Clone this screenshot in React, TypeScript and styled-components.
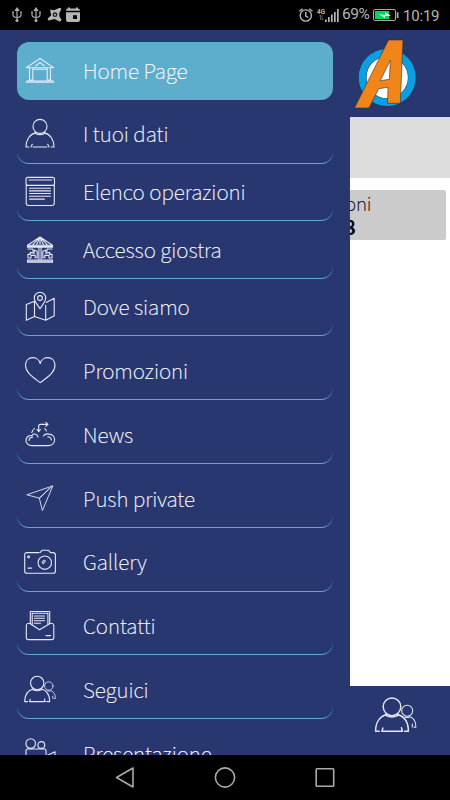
import React from "react";
import styled, { createGlobalStyle } from "styled-components";

const NAVY = "#293771";
const CYAN = "#5dadcd";

const GlobalStyle = createGlobalStyle`
  * { box-sizing: border-box; }
  body { margin: 0; background: #000; }
`;

const Phone = styled.div`
  display: flex;
  flex-direction: column;
  width: 450px;
  height: 800px;
  overflow: hidden;
  background: #000;
  font-family: "Noto Sans CJK SC", "Noto Sans", sans-serif;
  font-weight: 100;
`;

const StatusBar = styled.header`
  display: flex;
  justify-content: space-between;
  align-items: center;
  flex: none;
  height: 30px;
  padding: 0 10px 0 9px;
  color: #b5b5b5;
  font: 400 14.5px/30px Roboto, sans-serif;
`;

const StatusGroup = styled.div`
  display: flex;
  align-items: center;
  height: 30px;
`;

const Percent = styled.span`
  width: 28px;
  margin: -2px 2px 0 -2px;
  font-size: 15.5px;
  letter-spacing: -0.5px;
`;

const Clock = styled.span`
  width: 37px;
  margin-left: 4px;
  font-size: 15px;
  letter-spacing: -0.2px;
  padding-top: 1px;
`;

const Body = styled.main`
  display: flex;
  flex: none;
  height: 725px;
  overflow: hidden;
`;

const Drawer = styled.nav`
  display: flex;
  flex-direction: column;
  flex: none;
  width: 350px;
  height: 725px;
  padding: 12.3px 17px 0;
  overflow: hidden;
  background: ${NAVY};
`;

const MenuItem = styled.a<{ $active?: boolean; $gap?: boolean }>`
  display: flex;
  align-items: center;
  flex: none;
  height: 57.6px;
  margin-top: ${(p) => (p.$gap ? 6.2 : 0)}px;
  padding-left: 7px;
  border-radius: 12px;
  border-bottom: ${(p) => (p.$active ? "0" : `1.4px solid ${CYAN}`)};
  background: ${(p) => (p.$active ? CYAN : "transparent")};
  color: #fff;
`;

const MenuLabel = styled.span`
  margin: -2px 0 0 27px;
  font-size: 20.8px;
  line-height: 32px;
  letter-spacing: -0.05px;
  -webkit-text-stroke: 0.2px currentColor;
  white-space: nowrap;
`;

const Glyph = styled.svg`
  display: block;
  flex: none;
  overflow: visible;
  fill: none;
  stroke: #e6e9f5;
  stroke-width: 1.1;
  stroke-linecap: round;
  stroke-linejoin: round;
`;

const Page = styled.section`
  display: flex;
  flex-direction: column;
  flex: 1;
  min-width: 0;
  background: #fff;
`;

const PageHeader = styled.div`
  flex: none;
  height: 87px;
  padding: 8px 0 0 4px;
  background: ${NAVY};
`;

const Banner = styled.div`
  flex: none;
  height: 60.5px;
  background: #dcdcdc;
`;

const Card = styled.div`
  display: flex;
  flex-direction: column;
  flex: none;
  width: 95.5px;
  height: 50px;
  margin-top: 12.5px;
  border-radius: 0 2px 2px 0;
  background: #cbcbcb;
  color: #000;
  overflow: hidden;
`;

const CardTitle = styled.span`
  height: 26px;
  margin-left: -5px;
  font-size: 19px;
  line-height: 25px;
  letter-spacing: -0.2px;
  -webkit-text-stroke: 0.2px currentColor;
`;

const CardValue = styled.strong`
  height: 24px;
  margin-left: -6px;
  font-size: 20px;
  line-height: 22px;
  font-weight: 700;
`;

const Spacer = styled.div`
  flex: 1;
`;

const PageFooter = styled.div`
  flex: none;
  height: 69px;
  padding: 9px 0 0 24px;
  background: ${NAVY};
`;

const NavBar = styled.footer`
  display: flex;
  justify-content: space-between;
  align-items: center;
  flex: none;
  height: 45px;
  padding: 0 113px 2px;
`;

const Person = () => (
  <>
    <circle cx="16" cy="8.4" r="7" />
    <path d="M12 14.6C6 16 2 21.5 2 29H4.8M7 29L8.3 26.3M9 29H23M23.7 26.3L25 29M27.2 29H30C30 21.5 26 16 20 14.6M11.5 15.6Q16 18 20.5 15.6" />
  </>
);

const People = () => (
  <>
    <circle cx="13.2" cy="9" r="6.7" />
    <circle cx="24.8" cy="12" r="4.2" strokeWidth=".8" />
    <path d="M9.5 14.7C4 16.2 .7 21 .7 27.6H3.5M5.5 27.6L6.3 25.2M6 27.6H20.4M20.4 25L21.2 27.6M22.8 27.6H25.7C25.7 21 22.5 16.2 17 14.7M8.8 15.7Q13.2 17.8 17.5 15.7" />
    <path d="M23 16.8Q25 17.7 27 16.6C30 17.7 31.4 20.7 31.4 24.5H30M28.7 22.2V24.3" strokeWidth=".8" />
  </>
);

const drawings: Record<string, React.ReactNode> = {
  home: (
    <path d="M2.3 12.8L16 3.5 29.7 12.8ZM11.5 11L16 7.5 20.5 11M5.5 13.3V25H8.8V13.3M23.2 13.3V25H26.5V13.3M9.5 14.3H22.5M2.5 26H29.5V27.2H2.5Z" />
  ),
  person: <Person />,
  list: (
    <>
      <rect x="2" y="1.4" width="28.5" height="8" rx="2" />
      <path d="M2.2 9.4V27Q2.2 29.5 4.5 29.5H28Q30.3 29.5 30.3 27V9.4M5 4H27.7M5.5 12.3H26.5M5.5 14.9H26.5M5.5 17.5H26.5M5.5 20.2H26.5M5.5 23.1H20.5" />
    </>
  ),
  carousel: (
    <>
      <path d="M16 3L3.5 11.3H28.5ZM16 3L8.5 11.2M16 3L12.4 11.2M16 3L19.6 11.2M16 3L23.5 11.2M3.5 11.3V13.2H28.5V11.3M14.9 13V25M17.1 13V25M4 15H9V18M23 18V15H28M3.5 26H28.5V28.3H3.5Z" />
      <path d="M3.8 20.4H6.2V18.4L10.2 19.3V16L13.2 17.2V23.7H11.2V21.4H7V24H4V20.4M28.2 20.4H25.8V18.4L21.8 19.3V16L18.8 17.2V23.7H20.8V21.4H25V24H28V20.4" />
      <path d="M3.5 27.2H28.5M4 12.3H28M16 3.5V10" strokeWidth="1.2" />
    </>
  ),
  map: (
    <>
      <path d="M10.5 10.2L2.3 13.6V29.2L10.5 25.5 21.7 29.2 30.2 24.8V7.2L22.3 11.4M10.5 10.5V25.2M21.7 14.4V29" />
      <path d="M16 17.8C13 12.8 10.3 10.6 10.3 7A5.7 5.7 0 0 1 21.7 7C21.7 10.6 19 12.8 16 17.8Z" />
      <circle cx="16" cy="7" r="2.4" />
    </>
  ),
  heart: (
    <path d="M16.2 27.6C10 22.7 1.5 18 1.5 10.3C1.5 .8 14 0 16.2 8.5C18.4 0 31 .8 31 10.3C31 18 22.5 22.7 16.2 27.6Z" />
  ),
  cloud: (
    <>
      <path d="M8.2 16.5C0 15.8-.2 26.6 8 26.6H24C32.8 26.6 32.5 15.5 25 15.1C22.5 14.5 20.5 15.5 19.3 17M8.2 16.5C8.5 14 13 14.5 14 18M5 21.5C5.2 19 6.7 18.1 8.7 18.1M27.4 21C27 18.8 25.5 17.7 23.7 17.7M7.8 13.5L9 11M9.8 10L10.4 9.6M20.7 9.5L22.5 12" />
      <path d="M14.7 12.2V7Q14.7 5.4 16.7 5.4H23M21.8 3.4L24 5.4 21.8 7.4M13.1 10.5L14.7 12.7 16.4 10.5" />
    </>
  ),
  plane: <path d="M28.5 3L2.8 11.8 15.3 15.1 18.3 27.2ZM28.5 3L15.3 15.1M25.5 5.1L15.8 15.2" strokeWidth=".9" />,
  camera: (
    <>
      <path d="M14.8 6.6H3Q.7 6.6.7 9V25Q.7 27.3 3 27.3H29.2Q31.4 27.3 31.4 25V9Q31.4 6.6 29 6.6H26.5L24.7 4.3H18L16 6.6" />
      <circle cx="20.8" cy="16.7" r="6.7" />
      <path d="M18.3 16.6Q18.5 14.7 20.4 14.3M19.1 17.7L21.5 15M4 22.1H7.7" />
      <circle cx="4.6" cy="10.9" r=".9" />
    </>
  ),
  mail: (
    <>
      <path d="M6.5 13.5H4Q2.3 13.5 2.3 15.5V27.5Q2.3 29.6 4.3 29.6H27.7Q29.8 29.6 29.8 27.5V15.5Q29.8 13.5 28 13.5H25.5M6.3 13.8V1.5H25.7V13.8M6.3 13.8L15.5 19.8 25.7 13.8M8.2 14.5V3.2H23.9V14.5M10.3 6H20.5M10.3 8.3H20.5M10.3 10.7H20.5M10.3 13.2H16.5M22 25.6H26.5" />
    </>
  ),
  people: <People />,
  video: (
    <>
      <circle cx="6.7" cy="5.6" r="4.8" />
      <circle cx="17.3" cy="7" r="3.4" />
      <path d="M2 28V12.5Q2 11 3.5 11H20.5Q22 11 22 12.5V28M22 18L31 13.7V28" />
    </>
  ),
};

const items = [
  { label: "Home Page", icon: "home", active: true },
  { label: "I tuoi dati", icon: "person", gap: true },
  { label: "Elenco operazioni", icon: "list" },
  { label: "Accesso giostra", icon: "carousel" },
  { label: "Dove siamo", icon: "map" },
  { label: "Promozioni", icon: "heart", gap: true },
  { label: "News", icon: "cloud", gap: true },
  { label: "Push private", icon: "plane", gap: true },
  { label: "Gallery", icon: "camera", gap: true },
  { label: "Contatti", icon: "mail", gap: true },
  { label: "Seguici", icon: "people", gap: true },
  { label: "Presentazione", icon: "video", gap: true },
];

const Usb = () => (
  <svg width="19" height="16" viewBox="0 0 19 16" fill="none" stroke="#aaa" strokeWidth="1.2">
    <path d="M8 2V14M4 5V8Q4 10.3 8 10.5Q12 10.3 12 8V5" />
    <path d="M8 1L6.4 3.5H9.6ZM3 5H5M11 5H13" fill="#aaa" />
    <circle cx="8" cy="13.5" r="1" fill="#aaa" />
  </svg>
);

export default function App() {
  return (
    <>
      <GlobalStyle />
      <Phone>
        <StatusBar>
          <StatusGroup>
            <Usb />
            <Usb />
            <svg width="19" height="16" viewBox="0 0 19 16" fill="#b5b5b5">
              <path d="M3 2.5L7 3.2 11.5 1.2Q14-.2 14.3 2.5L12.2 6.2 12.6 10 14.5 12.5Q14 15.5 11.5 14L7.5 12 2 13.5Q-.3 12.8 1.2 11L4.2 8.3Z" />
              <circle cx="8" cy="7.7" r="2.4" fill="#222" />
              <circle cx="8" cy="7.7" r="1" />
            </svg>
            <svg width="15" height="16" viewBox="0 0 15 16" fill="#b5b5b5">
              <path d="M0 3.8Q0 1.5 1.5 1.5H2V.5H4V1.5H10V.5H12V1.5Q14 1.5 14 3.8ZM0 5.3H14V13Q14 15 12 15H2Q0 15 0 13Z" />
              <path d="M7 8.2H11V12H7Z" fill="#000" />
            </svg>
          </StatusGroup>
          <StatusGroup>
            <svg width="18" height="16" viewBox="0.5 0 18 16" fill="none" stroke="#b5b5b5" strokeWidth="1.4">
              <circle cx="7.3" cy="8.5" r="5.6" />
              <path d="M7.3 5V9L9.7 10.3M.8 4.3L4 1.7M10.7 1.7L14 4.3" />
            </svg>
            <svg width="27" height="16" viewBox="3 0 27 16" fill="#b5b5b5">
              <text x="3" y="6.8" fontSize="7" fontWeight="700" fontFamily="Roboto" textLength="8" lengthAdjust="spacingAndGlyphs">4G</text>
              <path d="M5 9.5L6.5 8V13M8 8V13L9.5 11.5" stroke="#555" fill="none" />
              <path d="M11 12.5H12.7V15H11ZM14 10H15.7V15H14ZM17 7.5H18.7V15H17ZM20 5H21.7V15H20ZM23 2H24.7V15H23Z" />
            </svg>
            <Percent>69%</Percent>
            <svg width="27" height="14" viewBox="0 0 27 14">
              <rect x="1.5" y="1.5" width="22" height="11" rx="1.5" fill="none" stroke="#aaa" />
              <path d="M3 3H17V11H3Z" fill="#00d657" />
              <path d="M7 6.3L13 7V4L19 7.8 13 8.1V10Z" fill="#fff" />
              <path d="M24.7 4.2H26.5V10H24.7Z" fill="#aaa" />
            </svg>
            <Clock>10:19</Clock>
          </StatusGroup>
        </StatusBar>
        <Body>
          <Drawer>
            {items.map((item) => (
              <MenuItem key={item.label} $active={item.active} $gap={item.gap}>
                <Glyph width="32" height="32" viewBox="0 0 32 32">{drawings[item.icon]}</Glyph>
                <MenuLabel>{item.label}</MenuLabel>
              </MenuItem>
            ))}
          </Drawer>
          <Page>
            <PageHeader>
              <svg width="64" height="72" viewBox="354 38 64 72">
                <circle cx="387.2" cy="77.5" r="24.5" fill="#fff" />
                <circle cx="387.2" cy="77.5" r="24.8" fill="none" stroke="#26333c" strokeWidth="8.2" />
                <circle cx="387.2" cy="77.5" r="24.8" fill="none" stroke="#0a9fe4" strokeWidth="7.4" />
                <path d="M388.5 40H403L400.3 103.3H387.5L388 87.3 378.7 88.7 369 108H354.5ZM390.3 60.3L380.3 80.7 389.4 79.3Z" fill="#f08519" stroke="#29313a" strokeWidth=".6" fillRule="evenodd" />
              </svg>
            </PageHeader>
            <Banner />
            <Card>
              <CardTitle>oni</CardTitle>
              <CardValue>8</CardValue>
            </Card>
            <Spacer />
            <PageFooter>
              <Glyph width="42" height="42" viewBox="-0.5 0 32 32">
                <People />
              </Glyph>
            </PageFooter>
          </Page>
        </Body>
        <NavBar>
          <svg width="24" height="24" viewBox="0 0 24 24" fill="none" stroke="#aaa" strokeWidth="1.6" strokeLinejoin="round">
            <path d="M20 3V22L3.5 12.5Z" />
          </svg>
          <svg width="24" height="24" viewBox="0 0 24 24" fill="none" stroke="#aaa" strokeWidth="1.6">
            <circle cx="12" cy="12.5" r="9.6" />
          </svg>
          <svg width="24" height="24" viewBox="0 0 24 24" fill="none" stroke="#aaa" strokeWidth="1.6">
            <rect x="3.2" y="3.7" width="17.5" height="17.5" rx=".8" />
          </svg>
        </NavBar>
      </Phone>
    </>
  );
}
